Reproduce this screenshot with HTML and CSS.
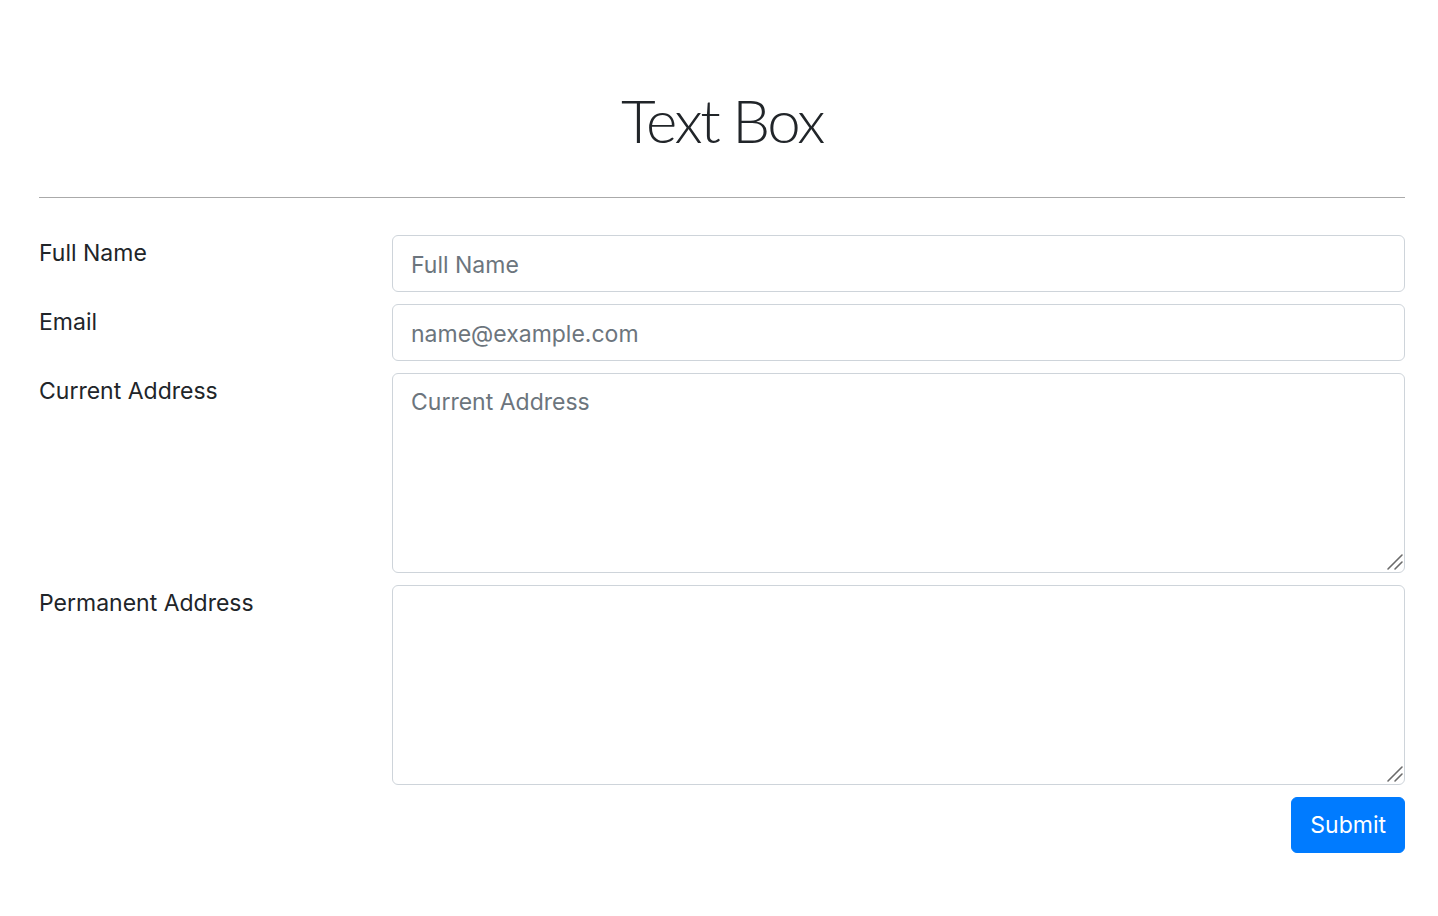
FILE: index.html
```html
<!DOCTYPE html>
<html lang="en">
<head>
<meta charset="utf-8">
<title>Text Box</title>
<link rel="stylesheet" href="styles.css">
</head>
<body>
<div class="container">
  <h1 class="title">Text Box</h1>
  <hr class="divider">
  <form class="form">
    <div class="row">
      <div class="col-label"><label for="userName">Full Name</label></div>
      <div class="col-field"><input id="userName" class="control" type="text" placeholder="Full Name"></div>
    </div>
    <div class="row">
      <div class="col-label"><label for="userEmail">Email</label></div>
      <div class="col-field"><input id="userEmail" class="control" type="email" placeholder="name@example.com"></div>
    </div>
    <div class="row">
      <div class="col-label"><label for="currentAddress">Current Address</label></div>
      <div class="col-field area-wrap">
        <textarea id="currentAddress" class="control area" placeholder="Current Address"></textarea>
        <svg class="grip" width="18" height="18" viewBox="0 0 18 18"><path d="M16 2 L2 16 M16 9 L9 16" stroke="#6b6b6b" stroke-width="1.6" stroke-linecap="round" fill="none"/></svg>
      </div>
    </div>
    <div class="row">
      <div class="col-label"><label for="permanentAddress">Permanent Address</label></div>
      <div class="col-field area-wrap">
        <textarea id="permanentAddress" class="control area"></textarea>
        <svg class="grip" width="18" height="18" viewBox="0 0 18 18"><path d="M16 2 L2 16 M16 9 L9 16" stroke="#6b6b6b" stroke-width="1.6" stroke-linecap="round" fill="none"/></svg>
      </div>
    </div>
    <div class="row actions">
      <button type="button" class="btn">Submit</button>
    </div>
  </form>
</div>
</body>
</html>
```

FILE: styles.css
```css
* { box-sizing: border-box; }
html, body { margin: 0; padding: 0; background: #fff; }
body {
  font-family: Inter, "Noto Sans", "Liberation Sans", sans-serif;
  font-size: 23px;
  line-height: 1.5;
  color: #212529;
}
.container {
  padding: 84px 33px 0 39px;
}
.title {
  margin: 0;
  text-align: center;
  font-family: Lato, Inter, sans-serif;
  font-size: 60px;
  font-weight: 300;
  line-height: 1.2;
  letter-spacing: -2.4px;
  color: #212529;
}
.divider {
  margin: 41px 0 37px;
  border: 0;
  border-top: 1px solid #aaaaaa;
  height: 0;
}
.row {
  display: flex;
  margin-bottom: 12px;
}
.col-label {
  flex: 0 0 353px;
  padding-top: 1px;
}
.col-label label {
  display: inline-block;
  font-size: 23px;
}
.col-field {
  flex: 1;
}
.area-wrap {
  position: relative;
}
.control {
  display: block;
  width: 100%;
  height: 57px;
  padding: 10px 18px 8px;
  font-family: inherit;
  font-size: 23px;
  line-height: 36px;
  color: #495057;
  background: #fff;
  border: 1px solid #ced4da;
  border-radius: 6px;
  outline: none;
}
.control::placeholder { color: #6c757d; opacity: 1; }
.area {
  height: 200px;
  resize: none;
}
.grip {
  position: absolute;
  right: 1px;
  bottom: 2px;
  pointer-events: none;
}
.actions {
  justify-content: flex-end;
}
.btn {
  height: 56px;
  padding: 9px 18px;
  font-family: inherit;
  font-size: 23px;
  line-height: 36px;
  color: #fff;
  background: #007bff;
  border: 1px solid #007bff;
  border-radius: 6px;
  cursor: pointer;
}
```
